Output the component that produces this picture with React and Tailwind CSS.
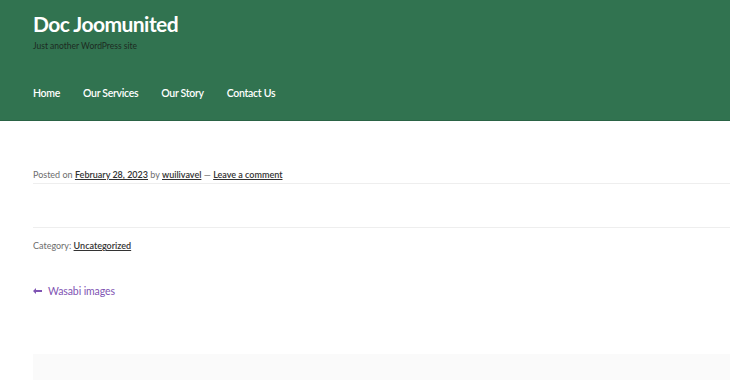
const NAV = ['Home', 'Our Services', 'Our Story', 'Contact Us']

export default function App() {
  return (
    <div className="min-h-[380px] overflow-hidden bg-white font-['Lato','Noto_Sans',sans-serif] text-[#6d6d6d]">
      <header className="h-[121px] border-b border-[#2a6345] bg-[#317350] pl-[33px]">
        <div className="pt-[12px]">
          <h1 className="text-[21px] font-bold leading-[24px] tracking-[-0.55px] text-white">Doc Joomunited</h1>
          <p className="mt-[5px] text-[8.5px] leading-[10px] text-[#1d2b22]">Just another WordPress site</p>
        </div>
        <nav className="mt-[35px] flex gap-[23px] text-[10.5px] font-semibold leading-[14px] tracking-[-0.3px] text-white">
          {NAV.map((item) => (
            <a key={item} href="#">{item}</a>
          ))}
        </nav>
      </header>

      <main className="pl-[33px] pt-[48px]">
        <div className="border-b border-[#eeeeee] pb-[2px] text-[9px] leading-[12px]">
          Posted on{' '}
          <a href="#" className="font-semibold text-[#333] underline">February 28, 2023</a>{' '}
          by{' '}
          <a href="#" className="font-semibold text-[#333] underline">wuilivavel</a>{' '}
          —{' '}
          <a href="#" className="font-semibold text-[#333] underline">Leave a comment</a>
        </div>

        <div className="h-[44px] border-b border-[#eeeeee]" />

        <div className="pt-[12px] text-[9px] leading-[12px]">
          Category: <a href="#" className="font-semibold text-[#333] underline">Uncategorized</a>
        </div>

        <a href="#" className="mt-[32px] flex items-center gap-[6px] text-[10.5px] leading-[14px] tracking-[-0.1px] text-[#7f54b3]">
          <svg width="9" height="6" viewBox="0 0 9 6" fill="currentColor">
            <path d="M0 3 L3 0 L3 2 L9 2 L9 4 L3 4 L3 6 Z" />
          </svg>
          Wasabi images
        </a>

        <div className="mt-[56px] h-[40px] bg-[#fafafa]" />
      </main>
    </div>
  )
}
